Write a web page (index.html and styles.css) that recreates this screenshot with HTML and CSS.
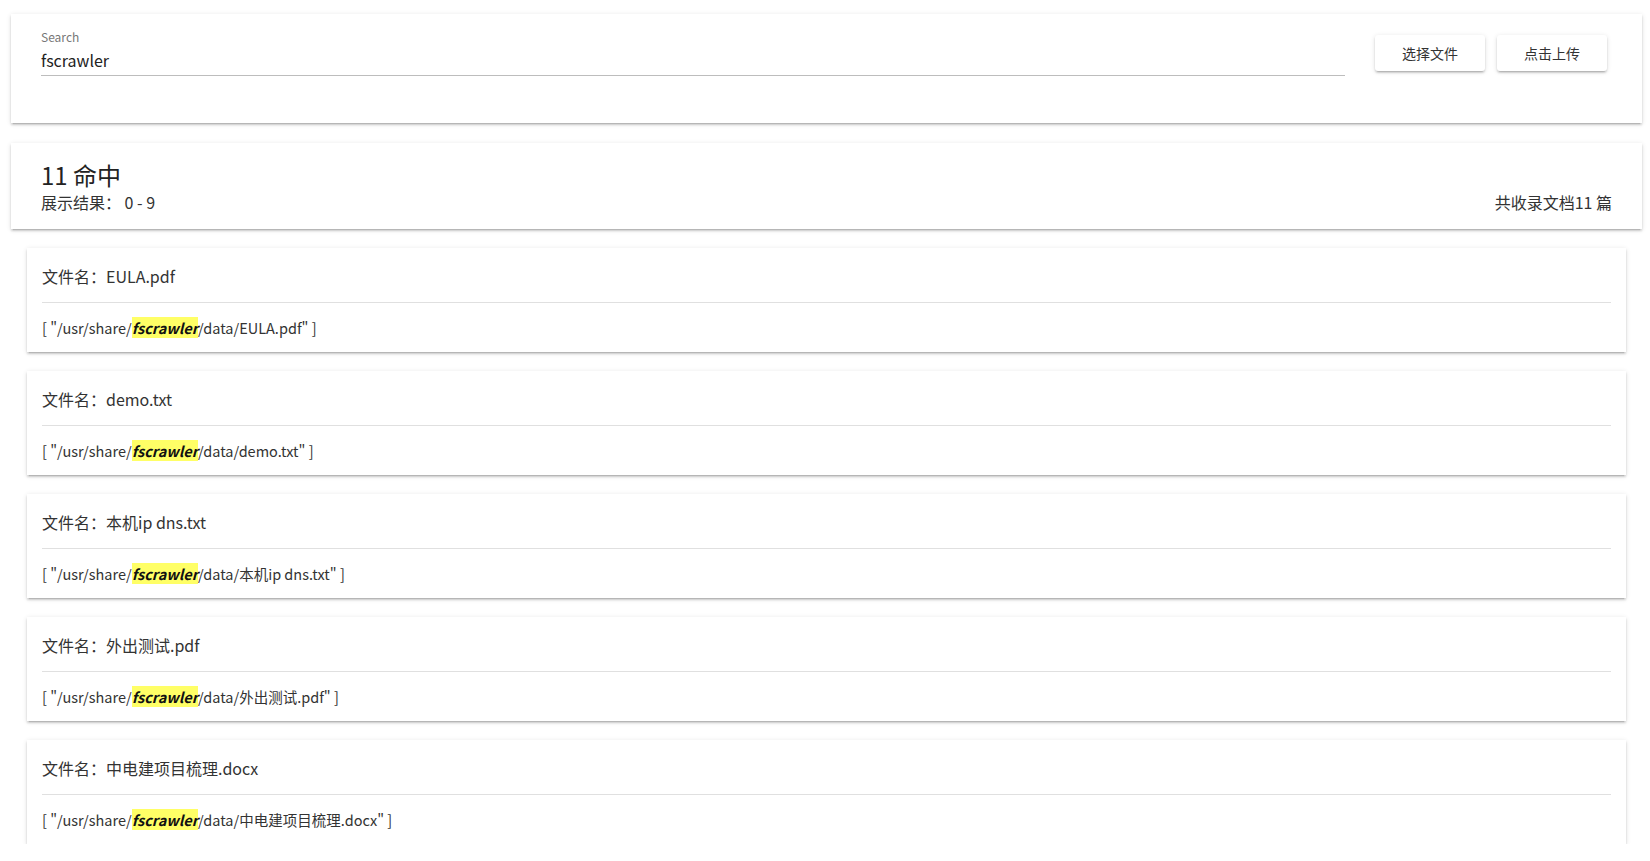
FILE: index.html
```html
<!DOCTYPE html>
<html lang="zh-CN">
<head>
  <meta charset="UTF-8">
  <title>fscrawler 搜索</title>
  <link rel="stylesheet" href="styles.css">
</head>
<body>
  <div class="page">

    <div class="card search-card">
      <div class="search-field">
        <label class="search-label" for="q">Search</label>
        <input class="search-input" id="q" type="text" value="fscrawler">
      </div>
      <button class="btn">选择文件</button>
      <button class="btn">点击上传</button>
    </div>

    <div class="card summary-card">
      <div class="hits">11 命中</div>
      <div class="summary-row">
        <span>展示结果： 0 - 9</span>
        <span>共收录文档11 篇</span>
      </div>
    </div>

    <div class="results">
      <div class="result">
        <div class="result-title">文件名：EULA.pdf</div>
        <div class="result-path">[ "/usr/share/<em class="hl">fscrawler</em>/data/EULA.pdf" ]</div>
      </div>
      <div class="result">
        <div class="result-title">文件名：demo.txt</div>
        <div class="result-path">[ "/usr/share/<em class="hl">fscrawler</em>/data/demo.txt" ]</div>
      </div>
      <div class="result">
        <div class="result-title">文件名：本机ip dns.txt</div>
        <div class="result-path">[ "/usr/share/<em class="hl">fscrawler</em>/data/本机ip dns.txt" ]</div>
      </div>
      <div class="result">
        <div class="result-title">文件名：外出测试.pdf</div>
        <div class="result-path">[ "/usr/share/<em class="hl">fscrawler</em>/data/外出测试.pdf" ]</div>
      </div>
      <div class="result">
        <div class="result-title">文件名：中电建项目梳理.docx</div>
        <div class="result-path">[ "/usr/share/<em class="hl">fscrawler</em>/data/中电建项目梳理.docx" ]</div>
      </div>
    </div>
  </div>
</body>
</html>
```

FILE: styles.css
```css
body {
  font-family: "Noto Sans CJK SC", "Noto Sans", sans-serif;
  margin: 0;
  padding: 0;
  background: #ffffff;
  color: #333;
}

.page {
  padding: 14px 8px 0 11px;
}

.card {
  background: #fff;
  box-shadow: 0 2px 2px rgba(0, 0, 0, 0.14), 0 3px 1px -2px rgba(0, 0, 0, 0.12), 0 1px 5px rgba(0, 0, 0, 0.12);
}

/* barra de busca */
.search-card {
  display: flex;
  align-items: flex-start;
  gap: 12px;
  padding: 16px 35px 47px 30px;
}

.search-field {
  flex: 1;
  margin-right: 18px;
}

.search-label {
  display: block;
  font-size: 12px;
  line-height: 14px;
  color: #777;
}

.search-input {
  display: block;
  width: 100%;
  height: 22px;
  margin-top: 5px;
  padding: 0 0 4px;
  border: none;
  border-bottom: 1px solid #bdbdbd;
  outline: none;
  background: transparent;
  font-family: inherit;
  font-size: 16px;
  line-height: 22px;
  color: #222;
}

.btn {
  margin-top: 5px;
  width: 110px;
  height: 36px;
  background: #fff;
  border: none;
  border-radius: 3px;
  font-family: inherit;
  font-size: 14px;
  color: #333;
  cursor: pointer;
  box-shadow: 0 2px 2px rgba(0, 0, 0, 0.14), 0 3px 1px -2px rgba(0, 0, 0, 0.12), 0 1px 5px rgba(0, 0, 0, 0.12);
}

/* resumo */
.summary-card {
  margin-top: 20px;
  padding: 16px 30px;
}

.hits {
  font-size: 24px;
  line-height: 32px;
  color: #222;
}

.summary-row {
  display: flex;
  justify-content: space-between;
  font-size: 16px;
  line-height: 22px;
}

/* resultados */
.results {
  display: flex;
  flex-direction: column;
  gap: 19px;
  margin: 19px 16px 0;
}

.result {
  padding: 16px 15px 14px;
  background: #fff;
  box-shadow: 0 2px 2px rgba(0, 0, 0, 0.14), 0 3px 1px -2px rgba(0, 0, 0, 0.12), 0 1px 5px rgba(0, 0, 0, 0.12);
}

.result-title {
  font-size: 16px;
  line-height: 24px;
  padding-bottom: 14px;
  border-bottom: 1px solid #e0e0e0;
}

.result-path {
  margin-top: 15px;
  font-size: 14.5px;
  line-height: 20px;
}

.hl {
  background: #ffff66;
  font-weight: bold;
  color: #111;
}
```
